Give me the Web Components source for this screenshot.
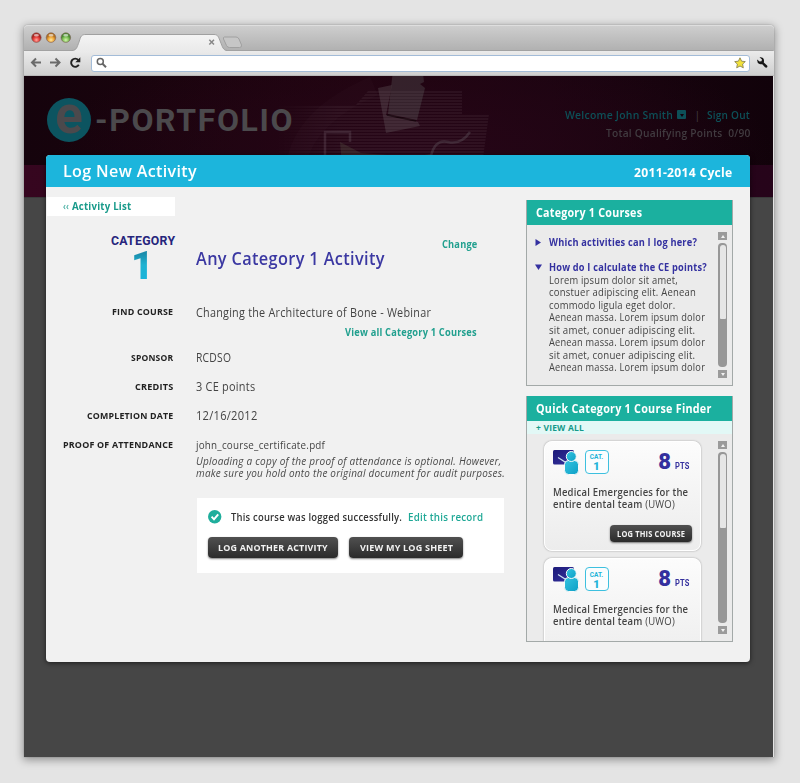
<!DOCTYPE html>
<html lang="en">
<head>
<meta charset="utf-8">
<title>e-Portfolio – Log New Activity</title>
<style>
html,body{margin:0;height:783px;overflow:hidden}
body{background:#e4e4e4;font-family:"Open Sans","Noto Sans",sans-serif;color:#444;box-sizing:border-box;padding:25px 26px 26px 24px}
</style>
</head>
<body>
<browser-window><portfolio-page></portfolio-page></browser-window>
<script>
function define(name, html, after) {
  const t = document.createElement('template');
  t.innerHTML = html;
  customElements.define(name, class extends HTMLElement {
    connectedCallback() {
      if (this.shadowRoot) return;
      this.attachShadow({mode: 'open'}).appendChild(t.content.cloneNode(true));
      if (after) after(this, this.shadowRoot);
    }
  });
}

define('browser-window', `
<style>
:host{display:flex;flex-direction:column;height:732px;box-shadow:0 2px 9px 1px rgba(0,0,0,.36),0 0 1px rgba(0,0,0,.5);border-radius:4px 4px 0 0}
.tabs{height:26px;flex:none;background:linear-gradient(#cfcfcf,#b0b0b0);border-radius:4px 4px 0 0;display:flex;align-items:flex-end;box-shadow:inset 0 1px #dedede}
svg{display:block;flex:none}
.bar{height:25px;flex:none;background:linear-gradient(#ebebeb,#cfcfcf);display:flex;align-items:center;border-bottom:1px solid #b9b9b9;box-sizing:border-box}
.url{width:659px;height:17px;box-sizing:border-box;border:1px solid #a3bcd8;border-radius:3px;background:#fff;display:flex;align-items:center;justify-content:space-between;padding:0 3px 0 4px;flex:none}
</style>
<div class="tabs"><svg width="749" height="26" viewBox="0 0 749 26">
<defs>
<linearGradient id="tab" x2="0" y2="1"><stop stop-color="#f4f4f4"/><stop offset="1" stop-color="#eaeaea"/></linearGradient>
<radialGradient id="r" cy=".75"><stop stop-color="#ffa8a0"/><stop offset=".6" stop-color="#e8403c"/><stop offset="1" stop-color="#a82420"/></radialGradient>
<radialGradient id="y" cy=".75"><stop stop-color="#ffe9a0"/><stop offset=".6" stop-color="#f0a93c"/><stop offset="1" stop-color="#b07020"/></radialGradient>
<radialGradient id="g" cy=".75"><stop stop-color="#d5f5b0"/><stop offset=".6" stop-color="#82c45a"/><stop offset="1" stop-color="#4c8a34"/></radialGradient>
</defs>
<path d="M0 25.5H749" stroke="#a2a2a2"/>
<path d="M48 26C53 25 53 22 55 17C57 11 57 9.500 62 9.500H190C194 9.500 194.500 12 196.500 17C198.500 22 199 25 203 26Z" fill="url(#tab)"/>
<path d="M48 25.500C53 25 53 22 55 17C57 11 57 9.500 62 9.500H190C194 9.500 194.500 12 196.500 17C198.500 22 199 25 203 25.500" fill="none" stroke="#a0a0a0"/>
<path d="M200.500 12H212Q214 12 215 14L217.500 20Q218 22.500 215.500 22.500H205.500Q203.500 22.500 202.500 20.500L199.500 14Q199 12 200.500 12Z" fill="#c6c6c6" stroke="#a0a0a0"/>
<g stroke="#7d5c55" stroke-width=".6"><circle cx="12.400" cy="12.600" r="4.800" fill="url(#r)"/><circle cx="27" cy="12.600" r="4.800" fill="url(#y)"/><circle cx="41.800" cy="12.600" r="4.800" fill="url(#g)"/></g>
<g fill="#fff" opacity=".6"><ellipse cx="12.400" cy="10.200" rx="2.500" ry="1.300"/><ellipse cx="27" cy="10.200" rx="2.500" ry="1.300"/><ellipse cx="41.800" cy="10.200" rx="2.500" ry="1.300"/></g>
<path d="M185.300 14.800L190 19.500M190 14.800L185.300 19.500" stroke="#888" stroke-width="1.500"/>
</svg></div>
<div class="bar">
<svg width="67" height="24" viewBox="0 0 67 24" fill="none" stroke="#6a6a6a" stroke-width="2">
<path d="M17 11.500H8M12 7.500L8 11.500L12 15.500M26 11.500H35.500M31.500 7.500L35.500 11.500L31.500 15.500"/>
<path d="M54.300 9A4.100 4.100 0 1 0 54.800 13.800" stroke="#222" stroke-width="1.900"/><path d="M56.300 6.300V11.300H51.300Z" fill="#222" stroke="none"/>
</svg>
<div class="url">
<svg width="12" height="12" viewBox="0 0 12 12" fill="none" stroke="#666"><circle cx="4.300" cy="4.500" r="3" stroke-width="1.500"/><path d="M6.500 6.800L10 10.300" stroke-width="2"/></svg>
<svg width="12" height="12" viewBox="0 0 12 12"><path d="M6 .8L7.600 4.200L11.300 4.600L8.600 7.100L9.300 10.800L6 9L2.700 10.800L3.400 7.100L.7 4.600L4.400 4.200Z" fill="#f2e23a" stroke="#8b8550" stroke-width=".9"/></svg>
</div>
<svg width="23" height="24" viewBox="1 0 23 24"><path d="M10.500 6.300L13 8.500L12.500 10.300L10.500 10.600L8.200 8.500Q7.800 12 10.500 13Q12.500 13.500 13.300 13.200L16 16.300Q17.500 17.200 18.300 15.900Q18.700 15 17.800 14.200L14.800 11.500Q15.500 8.500 14 7Q12.300 5.800 10.500 6.300Z" fill="#161616"/></svg>
</div>
<slot></slot>`);

define('log-mark', `
<style>
:host{display:flex;align-items:center;height:44px;color:#4b494c;font-family:Roboto,sans-serif;font-weight:700}
.c{width:44px;height:44px;border-radius:50%;background:#0c5460;display:flex;justify-content:center;font-size:51px;line-height:36px;margin-right:4px;flex:none;font-weight:700}
.w{font-size:32px;line-height:46px;font-weight:700}
</style>
<div class="c"><span>e</span></div><div class="w"><fit-text w="199">-PORTFOLIO</fit-text></div>`);

define('portfolio-page', `
<style>
:host{display:block;position:relative;height:681px;width:749px;background:#464646;overflow:hidden}
.head{height:89px;background:radial-gradient(ellipse 360px 130px at 52% 90%,#260517,#21041a00 100%),linear-gradient(90deg,#15030c,#20040f 45%,#1b0410 70%,#11020a);display:grid;grid-template:89px/1fr}
.head>*{grid-area:1/1}
.row{display:flex;justify-content:space-between;align-items:flex-start;padding:22px 23px 0 23px}
.strip{height:33px;background:linear-gradient(90deg,#36061f,#26041a);border-bottom:1px solid #3a3a3a;box-sizing:border-box}
.user{text-align:right;font-size:11.200px;font-weight:600;padding-top:7.500px;color:#413b40}
.user div{height:18px;line-height:18px;display:flex;justify-content:flex-end;align-items:center}
.t{color:#0d5058}
i{width:9px;height:9px;border-radius:1px;background:#0d5058;margin:0 8px 0 4px;display:grid;place-items:center}
i::after{content:"";border:2px solid transparent;border-top:3px solid #14020c;border-bottom:0;margin-top:1px}
.p{margin-right:6.500px;font-weight:400}
activity-dialog{position:absolute;left:22px;top:79px}
</style>
<div class="head">
<svg width="749" height="89" viewBox="0 0 749 89">
<defs><pattern id="l" width="4" height="3" patternUnits="userSpaceOnUse"><path d="M0 1H4" stroke="#8a7a80" stroke-width="1.200"/></pattern>
<linearGradient id="f"><stop stop-color="#fff" stop-opacity="0"/><stop offset=".3" stop-color="#fff"/><stop offset="1" stop-color="#fff"/></linearGradient><mask id="m"><path d="M250 29H332L344 15H438V38H465L458 89H250Z" fill="url(#f)"/></mask></defs>
<path d="M272 89Q280 40 350 10" fill="none" stroke="#fff" opacity=".015" stroke-width="20"/>
<path d="M354 12L368 9L362 39L394 46L396 50L362 57Z" fill="#54454c" opacity=".45"/>
<path d="M369 -6L399 -3L400 6L396 8L401 12L393 44L364 38Z" fill="#463a40" opacity=".55"/>
<path d="M363 39L392 45" stroke="#16040c" stroke-width="1.500"/>
<path d="M301 89V56H326V66" fill="none" stroke="#513a48" stroke-width="2.500" opacity=".5"/>
<path d="M316 66L337 77L390 81L406 78L440 89H318Z" fill="#4c4038" opacity=".4"/>
<path d="M407 80Q411 63 424 66T446 56" fill="none" stroke="#45313d" stroke-width="2.500" opacity=".7"/>
<rect x="250" width="215" height="89" fill="url(#l)" mask="url(#m)" opacity=".18"/>
</svg>
<div class="row"><log-mark></log-mark>
<div class="user"><div><fit-text w="108" class="t">Welcome John Smith</fit-text><i></i><span class="p">|</span><fit-text w="43" class="t">Sign Out</fit-text></div>
<div><fit-text w="144">Total Qualifying Points&nbsp; 0/90</fit-text></div></div></div>
</div>
<div class="strip"></div>
<activity-dialog></activity-dialog>`);

define('dark-button', `
<style>
:host{display:flex;align-items:center;justify-content:center;box-sizing:border-box;height:21px;border-radius:4px;background:linear-gradient(#505050,#2b2b2b);box-shadow:0 1px 2px rgba(0,0,0,.5);color:#f2f2f2;font-weight:700;font-size:9.300px;line-height:20px}
</style><slot></slot>`);

define('form-row', `
<style>
:host{display:grid;grid-template-columns:126px 1fr;column-gap:23px;height:20px;line-height:20px;font-size:12px}
.l{font-size:9.300px;font-weight:700;color:#222;text-align:right}
.v{padding-top:.5px}
</style><div class="l"><slot name="label"></slot></div><div class="v"><slot></slot></div>`);

define('scroll-rail', `
<style>
:host{display:flex;flex-direction:column;width:9px;gap:3px}
.b{height:8px;flex:none;background:#9b9b9b;display:grid;place-items:center}
.b::after{content:"";border:2.500px solid transparent;border-bottom:3px solid #f2f2f2;border-top:0}
.d::after{transform:rotate(180deg)}
.r{flex:1;background:#979797;border-radius:4px;padding:1.500px;box-sizing:border-box}
.h{background:#e6e6e6;border-radius:3px 3px 1px 1px;height:var(--thumb)}
</style><div class="b"></div><div class="r"><div class="h"></div></div><div class="b d"></div>`);

define('side-panel', `
<style>
:host{display:flex;flex-direction:column;box-sizing:border-box;width:207px;background:#ebebeb;border:1px solid #a3a9a8;border-top:0;overflow:hidden}
h2{margin:0 -1px;padding-left:10px;background:#1bb09f;color:#fff;font-size:12px;font-weight:700;height:25px;line-height:25px;flex:none}
.sub{background:#e2f8f6;height:13px;line-height:13px;font-size:8.500px;font-weight:700;color:#159a8a;padding-left:9px}
.body{display:flex;flex:1;min-height:0;justify-content:space-between;padding-right:5px}
.rail{display:flex;padding:7px 0 7px}
.rail scroll-rail{height:100%}
</style><h2><slot name="title"></slot></h2><div class="sub" hidden><slot name="sub"></slot></div><div class="body"><slot></slot><div class="rail"><scroll-rail></scroll-rail></div></div>`,
(h, r) => { if (h.querySelector('[slot=sub]')) r.querySelector('.sub').hidden = false; });

define('faq-list', `
<style>
:host{display:block;padding:11px 0 0 8px;font-size:10.600px;line-height:12.550px}
.q{display:flex;align-items:center;color:#3431a0;font-weight:700;height:12px;line-height:12px}
.q svg{width:7px;height:7px;margin-right:7px;fill:#3431a0;flex:none}
.two{margin-top:13px;margin-bottom:.6px}
.a{padding-left:14px;display:flex;flex-direction:column;align-items:flex-start}
.a fit-text{flex:none}
</style>
<div class="q"><svg viewBox="0 0 7 7"><path d="M.5 0L6 3.500L.5 7Z"/></svg><fit-text w="148">Which activities can I log here?</fit-text></div>
<div class="q two"><svg viewBox="0 0 7 7"><path d="M0 .5H7L3.500 6Z"/></svg><fit-text w="158">How do I calculate the CE points?</fit-text></div>
<div class="a"><fit-text w="129">Lorem ipsum dolor sit amet,</fit-text><fit-text w="147">constuer adipiscing elit. Aenean</fit-text><fit-text w="126">commodo ligula eget dolor.</fit-text><fit-text w="156">Aenean massa. Lorem ipsum dolor</fit-text><fit-text w="146">sit amet, conuer adipiscing elit.</fit-text><fit-text w="156">Aenean massa. Lorem ipsum dolor</fit-text><fit-text w="146">sit amet, conuer adipiscing elit.</fit-text><fit-text w="156">Aenean massa. Lorem ipsum dolor</fit-text></div>`);

define('course-card', `
<style>
:host{display:flex;flex-direction:column;box-sizing:border-box;width:157px;height:110px;flex:none;background:linear-gradient(#fcfcfc,#ececec);border:1.500px solid #fff;border-radius:8px;box-shadow:0 0 2px rgba(0,0,0,.35);padding:7px 9px 0 7.500px}
.top{display:flex;height:26px;align-items:center}
.cat{box-sizing:border-box;width:24px;height:24px;border:1px solid #3dc0df;border-radius:4px;background:#fafdfe;color:#1fb4d8;font-weight:700;text-align:center;margin-left:6px;font-size:6.500px;line-height:8px;padding-top:2.500px;font-family:Roboto,sans-serif}
.cat b{display:block;font-size:11px;line-height:11px}
.pts{margin-left:auto;display:flex;align-items:baseline;color:#34309e;font-family:Roboto,sans-serif;font-weight:700;font-size:9px;gap:4px;padding-right:2px}
.pts b{font-size:22px;line-height:22px}
p{margin:11px 0 0;font-size:10.600px;line-height:12px;font-weight:600;display:flex;flex-direction:column;align-items:flex-start}
s{text-decoration:none;font-weight:400}
dark-button{width:82px;height:17px;font-size:8px;line-height:17px;align-self:flex-end;margin:15px -1px 0 0}
</style>
<div class="top"><svg width="26" height="26" viewBox="0 0 26 26">
<defs><linearGradient id="n" x2="1" y2="1"><stop stop-color="#1c1a78"/><stop offset="1" stop-color="#35329f"/></linearGradient><linearGradient id="c" x2="1" y2="1"><stop stop-color="#35c4e0"/><stop offset="1" stop-color="#0d9fc6"/></linearGradient></defs>
<rect x="0" y="1" width="21" height="14.500" rx="1.500" fill="url(#n)"/><path d="M5 8.500L12 13" stroke="#cfe6f4" stroke-width="1.200"/>
<g fill="url(#c)" stroke="#fafafa" stroke-width="1"><rect x="11.500" y="11.500" width="14" height="14" rx="4"/><circle cx="18.300" cy="7.500" r="5"/></g></svg>
<div class="cat">CAT.<b>1</b></div><div class="pts"><b>8</b><fit-text w="14">PTS</fit-text></div></div>
<p><fit-text w="135">Medical Emergencies for the</fit-text><fit-text w="122">entire dental team <s>(UWO)</s></fit-text></p>
<dark-button><fit-text w="68">LOG THIS COURSE</fit-text></dark-button>`);

define('activity-dialog', `
<style>
:host{display:flex;flex-direction:column;width:704px;height:507px;background:#f1f1f1;border-radius:4px;box-shadow:0 1px 5px rgba(0,0,0,.6);overflow:hidden}
header{height:32px;flex:none;background:#1cb5dc;color:#fff;display:flex;justify-content:space-between;align-items:center;padding:0 18px 0 17px;font-weight:600;line-height:32px}
header .a{font-size:17px}header .b{font-size:12.500px;font-weight:700;padding-top:3px}
main{display:flex;justify-content:space-between;flex:1;padding:10px 17px 0 1px}
.left{display:flex;flex-direction:column;width:459px}
.back{background:#fff;width:128px;height:19px;line-height:19px;box-sizing:border-box;padding-left:16px;font-size:10.600px;font-weight:700;color:#189a8a}
.k{color:#22a08f;font-weight:700}
.cat{display:grid;grid-template-columns:128px 1fr;column-gap:21px;margin-top:16px;height:70px}
.num{display:flex;flex-direction:column;align-items:flex-end;font-family:Roboto,sans-serif;font-weight:700;color:#26257c;font-size:12.300px;line-height:18px}
.num b{font-size:39px;line-height:33px;font-weight:900;margin-right:21.500px;background:linear-gradient(#1a8cab 10%,#1fb3d2 45%,#18b4dc);-webkit-background-clip:text;background-clip:text;color:transparent}
.ti{display:flex;justify-content:space-between;width:281px}
h1{margin:14px 0 0;font-size:18px;line-height:24px;font-weight:600;color:#3b38a2}
.ch{font-size:10.500px;line-height:24px}
.link{font-size:10.500px;line-height:20px;height:25.500px;width:429.500px;text-align:right}
.g{margin-top:9px}
em{font-size:10.300px;line-height:12px;padding-left:149px;display:flex;flex-direction:column;align-items:flex-start;margin-top:.5px;color:#4a4a4a}
.ok{margin:19px 0 0 150px;width:307px;height:75px;background:#fff;box-sizing:border-box;padding:10px 0 0 11px}
.msg{display:flex;align-items:center;height:18px;line-height:18px;font-size:10.800px;font-weight:600;color:#333}
.msg svg{margin-right:9px}
.bt{display:flex;gap:11px;margin-top:11px}
aside{display:flex;flex-direction:column;gap:10px;padding-top:3px;width:207px}
.cards{display:flex;flex-direction:column;gap:7.500px;padding:6.500px 4px 0 17px;overflow:hidden}
</style>
<header><span class="a"><fit-text w="134">Log New Activity</fit-text></span><span class="b"><fit-text w="98">2011-2014 Cycle</fit-text></span></header>
<main><div class="left">
<div class="back"><fit-text w="68"><span style="font-weight:400">‹‹</span> Activity List</fit-text></div>
<div class="cat"><div class="num"><fit-text w="64">CATEGORY</fit-text><b>1</b></div><div class="ti"><h1><fit-text w="188">Any Category 1 Activity</fit-text></h1><span class="k ch"><fit-text w="35">Change</fit-text></span></div></div>
<form-row><fit-text slot="label" w="61">FIND COURSE</fit-text><fit-text w="235">Changing the Architecture of Bone - Webinar</fit-text></form-row>
<div class="k link"><fit-text w="132">View all Category 1 Courses</fit-text></div>
<form-row><fit-text slot="label" w="42">SPONSOR</fit-text><fit-text w="35">RCDSO</fit-text></form-row>
<form-row class="g"><fit-text slot="label" w="38">CREDITS</fit-text><fit-text w="59">3 CE points</fit-text></form-row>
<form-row class="g"><fit-text slot="label" w="86">COMPLETION DATE</fit-text><fit-text w="61">12/16/2012</fit-text></form-row>
<form-row class="g"><fit-text slot="label" w="110">PROOF OF ATTENDANCE</fit-text><fit-text w="129" style="font-size:10.600px">john_course_certificate.pdf</fit-text></form-row>
<em><fit-text w="305">Uploading a copy of the proof of attendance is optional. However,</fit-text><fit-text w="309">make sure you hold onto the original document for audit purposes.</fit-text></em>
<div class="ok"><div class="msg"><svg width="14" height="14" viewBox="0 0 14 14"><circle cx="6.700" cy="6.700" r="6.700" fill="#1fae9c"/><path d="M3.600 6.600L6 9.300L10.200 4.300" fill="none" stroke="#fff" stroke-width="2"/></svg><fit-text w="171" style="margin-right:6px">This course was logged successfully.</fit-text><fit-text w="75" style="color:#1fa896">Edit this record</fit-text></div>
<div class="bt"><dark-button style="width:130px"><fit-text w="110">LOG ANOTHER ACTIVITY</fit-text></dark-button><dark-button style="width:114px"><fit-text w="93">VIEW MY LOG SHEET</fit-text></dark-button></div></div>
</div>
<aside>
<side-panel style="height:186px;--thumb:74px"><fit-text slot="title" w="106">Category 1 Courses</fit-text><faq-list></faq-list></side-panel>
<side-panel style="height:246px;--thumb:74px"><fit-text slot="title" w="175">Quick Category 1 Course Finder</fit-text><fit-text slot="sub" w="48">+ VIEW ALL</fit-text><div class="cards"><course-card></course-card><course-card></course-card></div></side-panel>
</aside></main>`);

/* A single line of text fitted to its intended width: wide lines are condensed, narrow ones tracked out. */
customElements.define('fit-text', class extends HTMLElement {
  connectedCallback() {
    if (this.shadowRoot) return;
    this.attachShadow({mode: 'open'}).innerHTML = '<style>:host{display:inline-block;white-space:nowrap;text-align:left}span{display:inline-block;transform-origin:0 50%}</style><span><slot></slot></span>';
    const s = this.shadowRoot.querySelector('span');
    const w = +this.getAttribute('w');
    const n = this.textContent.length;
    this.style.width = w + 'px';
    const track = parseFloat(getComputedStyle(this).fontSize) * .022;
    s.style.letterSpacing = track + 'px';
    const natural = s.offsetWidth;
    if (natural > w) s.style.transform = 'scaleX(' + (w / (natural - track)).toFixed(4) + ')';
    else s.style.letterSpacing = (track + (w - natural) / n).toFixed(3) + 'px';
  }
});
</script>
</body>
</html>
